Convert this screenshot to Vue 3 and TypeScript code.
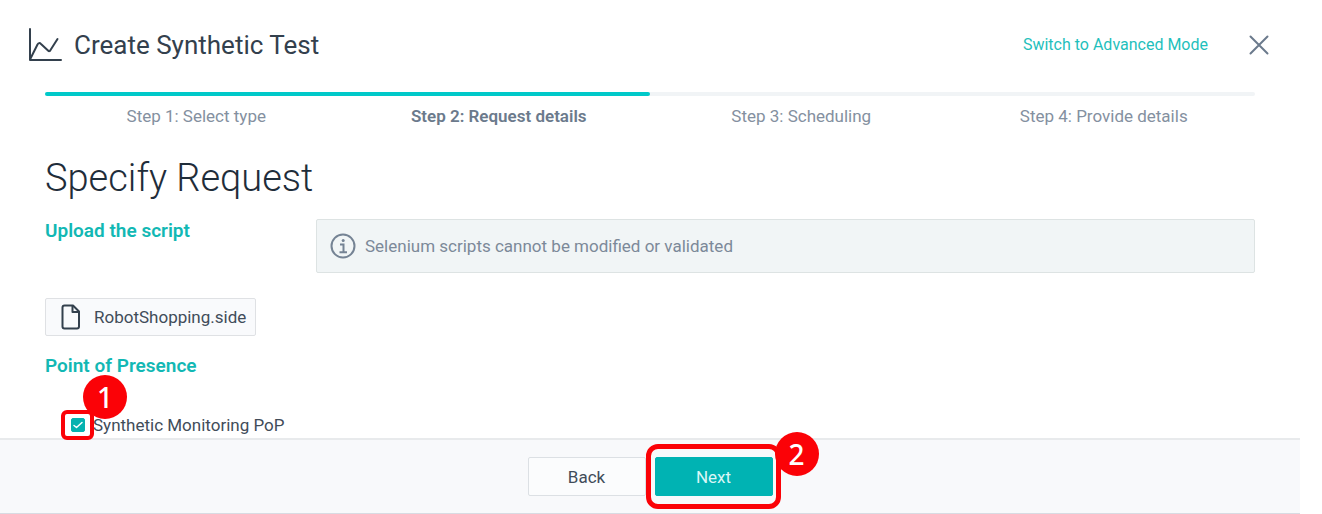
<script setup lang="ts">
import { ref } from 'vue'

interface Step {
  label: string
}

const steps: Step[] = [
  { label: 'Step 1: Select type' },
  { label: 'Step 2: Request details' },
  { label: 'Step 3: Scheduling' },
  { label: 'Step 4: Provide details' },
]
const current = ref(1)
const popSelected = ref(true)
</script>

<template>
  <div class="dialog">
    <header class="header">
      <svg class="chart-icon" viewBox="0 0 34 34" width="34" height="34" fill="none" stroke="#33404d" stroke-width="2" stroke-linecap="round" stroke-linejoin="round" aria-hidden="true">
        <path d="M2 1V32H33" />
        <path d="M2.500 30.500L9.500 16.500Q11 14 13 16L20 22.500Q21.500 24 22.500 22L29.500 11" />
      </svg>
      <h1 class="title">Create Synthetic Test</h1>
      <a class="mode-link" href="#">Switch to Advanced Mode</a>
      <button class="close" type="button" aria-label="Close">
        <svg viewBox="0 0 20 20" width="20" height="20" fill="none" stroke="#6b7a8c" stroke-width="2" stroke-linecap="round" aria-hidden="true">
          <path d="M1.500 1.500L18.500 18.500M18.500 1.500L1.500 18.500" />
        </svg>
      </button>
    </header>

    <main class="body">
      <div class="progress">
        <div class="progress-fill" :style="{ width: ((current + 1) / steps.length) * 100 + '%' }"></div>
      </div>
      <ol class="steps">
        <li v-for="(step, i) in steps" :key="step.label" class="step" :class="{ active: i === current }">{{ step.label }}</li>
      </ol>

      <h2 class="heading">Specify Request</h2>

      <div class="upload-row">
        <h3 class="section">Upload the script</h3>
        <div class="notice">
          <svg viewBox="0 0 26 26" width="26" height="26" fill="none" stroke="#758394" stroke-width="2" aria-hidden="true">
            <circle cx="13" cy="13" r="11.500" />
            <path d="M10 11.500H13.500V19M9.500 19.200H17" />
            <circle cx="13.200" cy="7.500" r="1.500" fill="#758394" stroke="none" />
          </svg>
          <span>Selenium scripts cannot be modified or validated</span>
        </div>
      </div>

      <button class="file" type="button">
        <svg viewBox="0 0 20 26" width="20" height="26" fill="none" stroke="#33404d" stroke-width="2" stroke-linejoin="round" aria-hidden="true">
          <path d="M3.500 1.500H12L18 7.500V22.500Q18 24.500 16 24.500H3.500Q1.500 24.500 1.500 22.500V3.500Q1.500 1.500 3.500 1.500Z" />
          <path d="M11.500 1.500V8H18" />
        </svg>
        <span>RobotShopping.side</span>
      </button>

      <h3 class="section">Point of Presence</h3>

      <div class="pop">
        <span class="check-wrap">
          <input id="pop" v-model="popSelected" class="check" type="checkbox" />
          <svg class="tick" viewBox="0 0 14 14" width="14" height="14" fill="none" stroke="#fff" stroke-width="1.500" stroke-linecap="round" stroke-linejoin="round" aria-hidden="true">
            <path d="M3 7.500L5.500 9.500L11 4.500" />
          </svg>
          <span class="ring ring-check"></span>
          <span class="badge badge-check">1</span>
        </span>
        <label for="pop">Synthetic Monitoring PoP</label>
      </div>
    </main>

    <footer class="footer">
      <button class="btn" type="button">Back</button>
      <span class="next-wrap">
        <button class="btn primary" type="button">Next</button>
        <span class="ring ring-next"></span>
        <span class="badge badge-next">2</span>
      </span>
    </footer>
  </div>
</template>

<style>
body {
  margin: 0;
  background: #fff;
}
</style>

<style scoped>
.dialog {
  box-sizing: border-box;
  display: flex;
  flex-direction: column;
  min-height: 100vh;
  margin-right: 22px;
  font-family: Roboto, 'Liberation Sans', sans-serif;
  font-size: 17px;
  line-height: 24px;
  color: #414c59;
}

h1,
h2,
h3,
ol {
  margin: 0;
  padding: 0;
}

button {
  font: inherit;
  color: inherit;
  cursor: pointer;
}

.header {
  display: flex;
  align-items: center;
  height: 92px;
  box-sizing: border-box;
  padding: 0 31px 2px 28px;
}

.title {
  margin: 0 auto 0 12px;
  font-size: 26px;
  line-height: 32px;
  font-weight: 400;
  color: #33404d;
}

.mode-link {
  font-size: 16px;
  color: #1fbfbc;
  text-decoration: none;
}

.close {
  display: flex;
  margin-left: 41px;
  padding: 0;
  border: 0;
  background: none;
}

.body {
  flex: 1;
  padding: 0 45px;
}

.progress {
  height: 4px;
  border-radius: 2px;
  background: #f1f4f6;
}

.progress-fill {
  height: 4px;
  border-radius: 2px;
  background: #00c9c9;
}

.steps {
  display: grid;
  grid-template-columns: repeat(4, 1fr);
  padding-top: 8px;
  list-style: none;
  text-align: center;
  color: #8490a0;
}

.step.active {
  font-weight: 600;
  color: #6b7a8c;
}

.heading {
  margin: 28px 0 19px;
  font-size: 38px;
  line-height: 44px;
  font-weight: 300;
  color: #1f2d3a;
}

.upload-row {
  display: grid;
  grid-template-columns: 271px 1fr;
}

.section {
  font-size: 19px;
  line-height: 24px;
  font-weight: 600;
  color: #12b8b4;
}

.notice {
  display: flex;
  align-items: center;
  gap: 9px;
  box-sizing: border-box;
  min-height: 54px;
  padding: 0 13px;
  border: 1px solid #dde3e3;
  border-radius: 2px;
  background: #f1f5f6;
  color: #7c8999;
}

.file {
  display: flex;
  align-items: center;
  gap: 13px;
  box-sizing: border-box;
  height: 38px;
  margin: 25px 0 18px;
  padding: 0 9px 0 15px;
  border: 1px solid #dfe1e4;
  border-radius: 2px;
  background: #f9fafc;
}

.pop {
  display: flex;
  align-items: center;
  gap: 8px;
  margin-top: 35px;
  padding-left: 26px;
}

.check-wrap {
  position: relative;
  display: flex;
}

.check {
  appearance: none;
  width: 14px;
  height: 14px;
  margin: 0;
  border: 1px solid #06b2b0;
  border-radius: 2px;
  background: #fff;
}

.check:checked {
  background: #06b2b0;
}

.tick {
  position: absolute;
  inset: 0;
  pointer-events: none;
}

.ring {
  position: absolute;
  box-sizing: border-box;
  border: 4px solid #fb0207;
  border-radius: 6px;
  pointer-events: none;
}

.ring-check {
  inset: -8px -9px -8px -10px;
}

.badge {
  position: absolute;
  width: 44px;
  height: 44px;
  border-radius: 50%;
  background: #fb0207;
  color: #fff;
  font-family: 'Noto Sans', sans-serif;
  font-size: 28px;
  line-height: 44px;
  font-weight: 500;
  text-align: center;
  pointer-events: none;
}

.badge-check {
  left: 12px;
  bottom: 13px;
}

.footer {
  display: flex;
  justify-content: center;
  align-items: center;
  gap: 9px;
  box-sizing: border-box;
  height: 76px;
  border-top: 2px solid #e8eaec;
  border-bottom: 1px solid #d8dbe2;
  background: #f8f9fb;
}

.btn {
  box-sizing: border-box;
  width: 118px;
  height: 39px;
  padding: 0;
  border: 1px solid #dce0e4;
  border-radius: 2px;
  background: #fbfcfd;
}

.primary {
  border-color: #00b3b3;
  background: #00b3b3;
  color: #d9f6f6;
}

.next-wrap {
  position: relative;
  display: flex;
}

.ring-next {
  inset: -13px -8px -13px -9px;
  border-width: 5px;
  border-radius: 12px;
}

.badge-next {
  left: 120px;
  bottom: 20px;
}
</style>
